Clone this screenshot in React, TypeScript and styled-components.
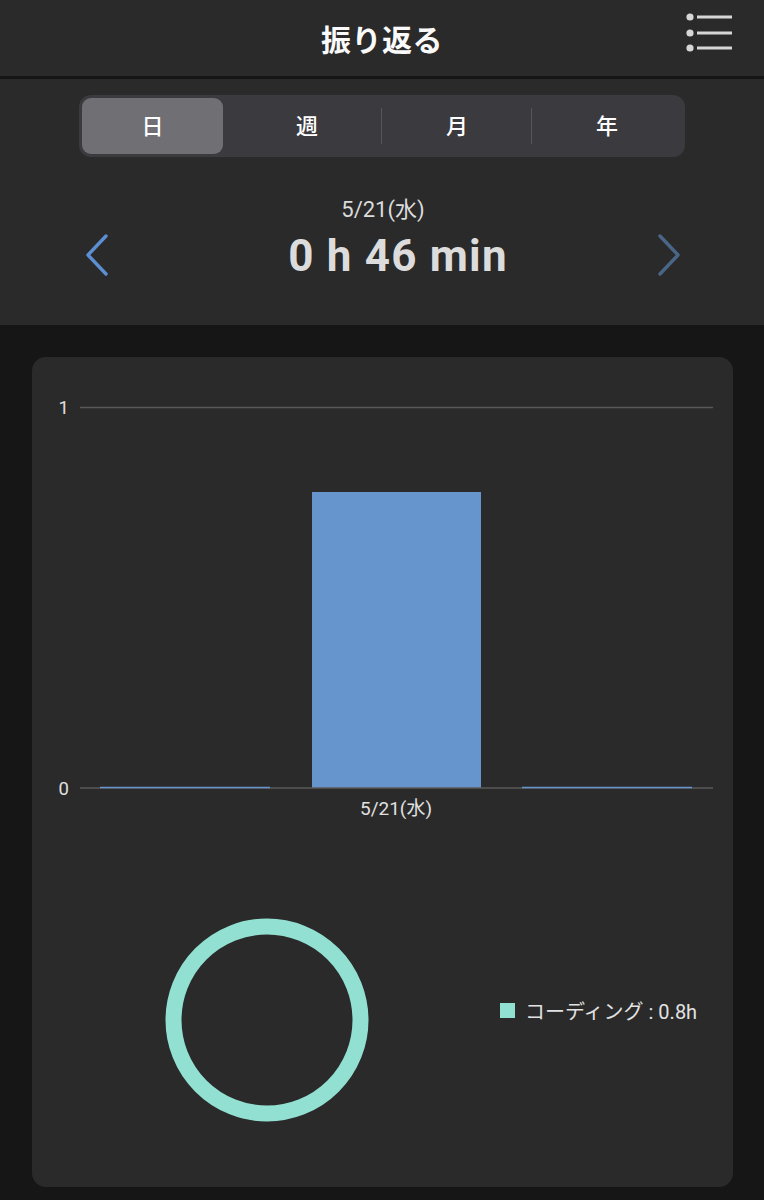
import React from "react";
import styled, { createGlobalStyle } from "styled-components";

const GlobalStyle = createGlobalStyle`
  body {
    margin: 0;
    background: #161616;
    font-family: Roboto, "Noto Sans CJK JP", sans-serif;
    color: #e6e6e6;
  }
`;

const Page = styled.div`
  width: 764px;
  min-height: 1200px;
  background: #161616;
`;

const Header = styled.header`
  position: relative;
  height: 76px;
  display: flex;
  align-items: center;
  justify-content: center;
  background: #2a2a2a;
  border-bottom: 3px solid #151515;
`;

const Title = styled.h1`
  margin: 0;
  font-size: 30px;
  font-weight: 700;
  color: #fafafa;
  letter-spacing: 0.5px;
`;

const MenuButton = styled.button`
  position: absolute;
  right: 28px;
  top: 11px;
  width: 52px;
  height: 44px;
  padding: 0;
  border: 0;
  background: none;
`;

const TopPanel = styled.section`
  background: #2a2a2a;
  height: 246px;
  padding-top: 16px;
  box-sizing: border-box;
`;

const Segments = styled.div`
  margin: 0 79px;
  height: 62px;
  padding: 3px;
  box-sizing: border-box;
  display: grid;
  grid-template-columns: repeat(4, 1fr);
  background: #3a3a3f;
  border-radius: 12px;
`;

const Segment = styled.div<{ $active?: boolean; $divider?: boolean }>`
  position: relative;
  display: flex;
  align-items: center;
  justify-content: center;
  padding-bottom: 4px;
  box-sizing: border-box;
  width: ${(p) => (p.$active ? "calc(100% - 9px)" : "100%")};
  background: ${(p) => (p.$active ? "#6f6f74" : "transparent")};
  border-radius: 9px;
  font-size: 22px;
  font-weight: 500;
  color: #fff;
  &:before {
    content: "";
    display: ${(p) => (p.$divider ? "block" : "none")};
    position: absolute;
    left: -1px;
    top: 10px;
    bottom: 10px;
    width: 1px;
    background: #56565b;
  }
`;

const DateBlock = styled.div`
  display: flex;
  align-items: center;
  justify-content: space-between;
  padding: 0 80px 0 82px;
  margin-top: 40px;
`;

const DateText = styled.div`
  display: flex;
  flex-direction: column;
  align-items: center;
`;

const DayLabel = styled.div`
  font-size: 22px;
  color: #dcdcdc;
  line-height: 26px;
`;

const Total = styled.div`
  font-size: 44px;
  font-weight: 700;
  color: #dcdcdc;
  line-height: 50px;
  margin-top: 8px;
  margin-left: 30px;
  letter-spacing: 1.2px;
`;

const Arrow = styled.button`
  width: 30px;
  height: 44px;
  padding: 0;
  border: 0;
  background: none;
  margin-top: 32px;
`;

const Body = styled.main`
  padding: 32px 31px 12px 32px;
`;

const Card = styled.div`
  height: 830px;
  background: #2a2a2a;
  border-radius: 14px;
  overflow: hidden;
`;

const DonutRow = styled.div`
  display: flex;
  align-items: center;
  padding-left: 130px;
  margin-top: 74px;
`;

const Legend = styled.div`
  display: flex;
  align-items: center;
  gap: 10px;
  margin-left: 128px;
  margin-bottom: 20px;
  font-size: 20px;
  color: #e2e2e2;
`;

const Swatch = styled.span`
  width: 15px;
  height: 15px;
  background: #92e0d2;
`;

const MenuIcon = () => (
  <svg width="52" height="44" viewBox="0 0 52 44">
    {[6, 22, 37].map((y) => (
      <g key={y}>
        <circle cx="6" cy={y} r="3.6" fill="#d6d6d6" />
        <rect x="13" y={y - 1.5} width="35" height="3" fill="#d6d6d6" />
      </g>
    ))}
  </svg>
);

const Chevron = ({ dir, color }: { dir: "left" | "right"; color: string }) => (
  <svg width="30" height="44" viewBox="0 0 30 44">
    <path
      d={dir === "left" ? "M24 3 L6 22 L24 41" : "M6 3 L24 22 L6 41"}
      fill="none"
      stroke={color}
      strokeWidth="3.4"
      strokeLinecap="round"
      strokeLinejoin="round"
    />
  </svg>
);

const axisFont = {
  fontFamily: 'Roboto, "Noto Sans CJK JP", sans-serif',
  fill: "#e0e0e0",
};

const BarChart = () => (
  <svg width="701" height="480" viewBox="0 0 701 480">
    <text x="37" y="56.5" fontSize="18.5" textAnchor="end" {...axisFont}>1</text>
    <line x1="48" y1="50.5" x2="681" y2="50.5" stroke="#5a5a5a" strokeWidth="1.5" />
    <rect x="280" y="135" width="169" height="296" fill="#6595cc" />
    <line x1="48" y1="431" x2="681" y2="431" stroke="#5a5a5a" strokeWidth="1.5" />
    <line x1="68" y1="430.5" x2="238" y2="430.5" stroke="#6595cc" strokeWidth="1.5" />
    <line x1="490" y1="430.5" x2="660" y2="430.5" stroke="#6595cc" strokeWidth="1.5" />
    <text x="37" y="437.5" fontSize="18.5" textAnchor="end" {...axisFont}>0</text>
    <text x="364" y="458" fontSize="19" textAnchor="middle" {...axisFont}>5/21(水)</text>
  </svg>
);

const Donut = () => (
  <svg width="210" height="210" viewBox="0 0 210 210">
    <circle cx="105" cy="105" r="93.5" fill="none" stroke="#92e0d2" strokeWidth="16" />
  </svg>
);

export default function App() {
  const tabs = ["日", "週", "月", "年"];
  return (
    <Page>
      <GlobalStyle />
      <Header>
        <Title>振り返る</Title>
        <MenuButton aria-label="menu">
          <MenuIcon />
        </MenuButton>
      </Header>
      <TopPanel>
        <Segments>
          {tabs.map((t, i) => (
            <Segment key={t} $active={i === 0} $divider={i >= 2}>
              {t}
            </Segment>
          ))}
        </Segments>
        <DateBlock>
          <Arrow aria-label="previous">
            <Chevron dir="left" color="#5b8fd2" />
          </Arrow>
          <DateText>
            <DayLabel>5/21(水)</DayLabel>
            <Total>0 h 46 min</Total>
          </DateText>
          <Arrow aria-label="next">
            <Chevron dir="right" color="#4a6687" />
          </Arrow>
        </DateBlock>
      </TopPanel>
      <Body>
        <Card>
          <BarChart />
          <DonutRow>
            <Donut />
            <Legend>
              <Swatch />
              コーディング : 0.8h
            </Legend>
          </DonutRow>
        </Card>
      </Body>
    </Page>
  );
}
